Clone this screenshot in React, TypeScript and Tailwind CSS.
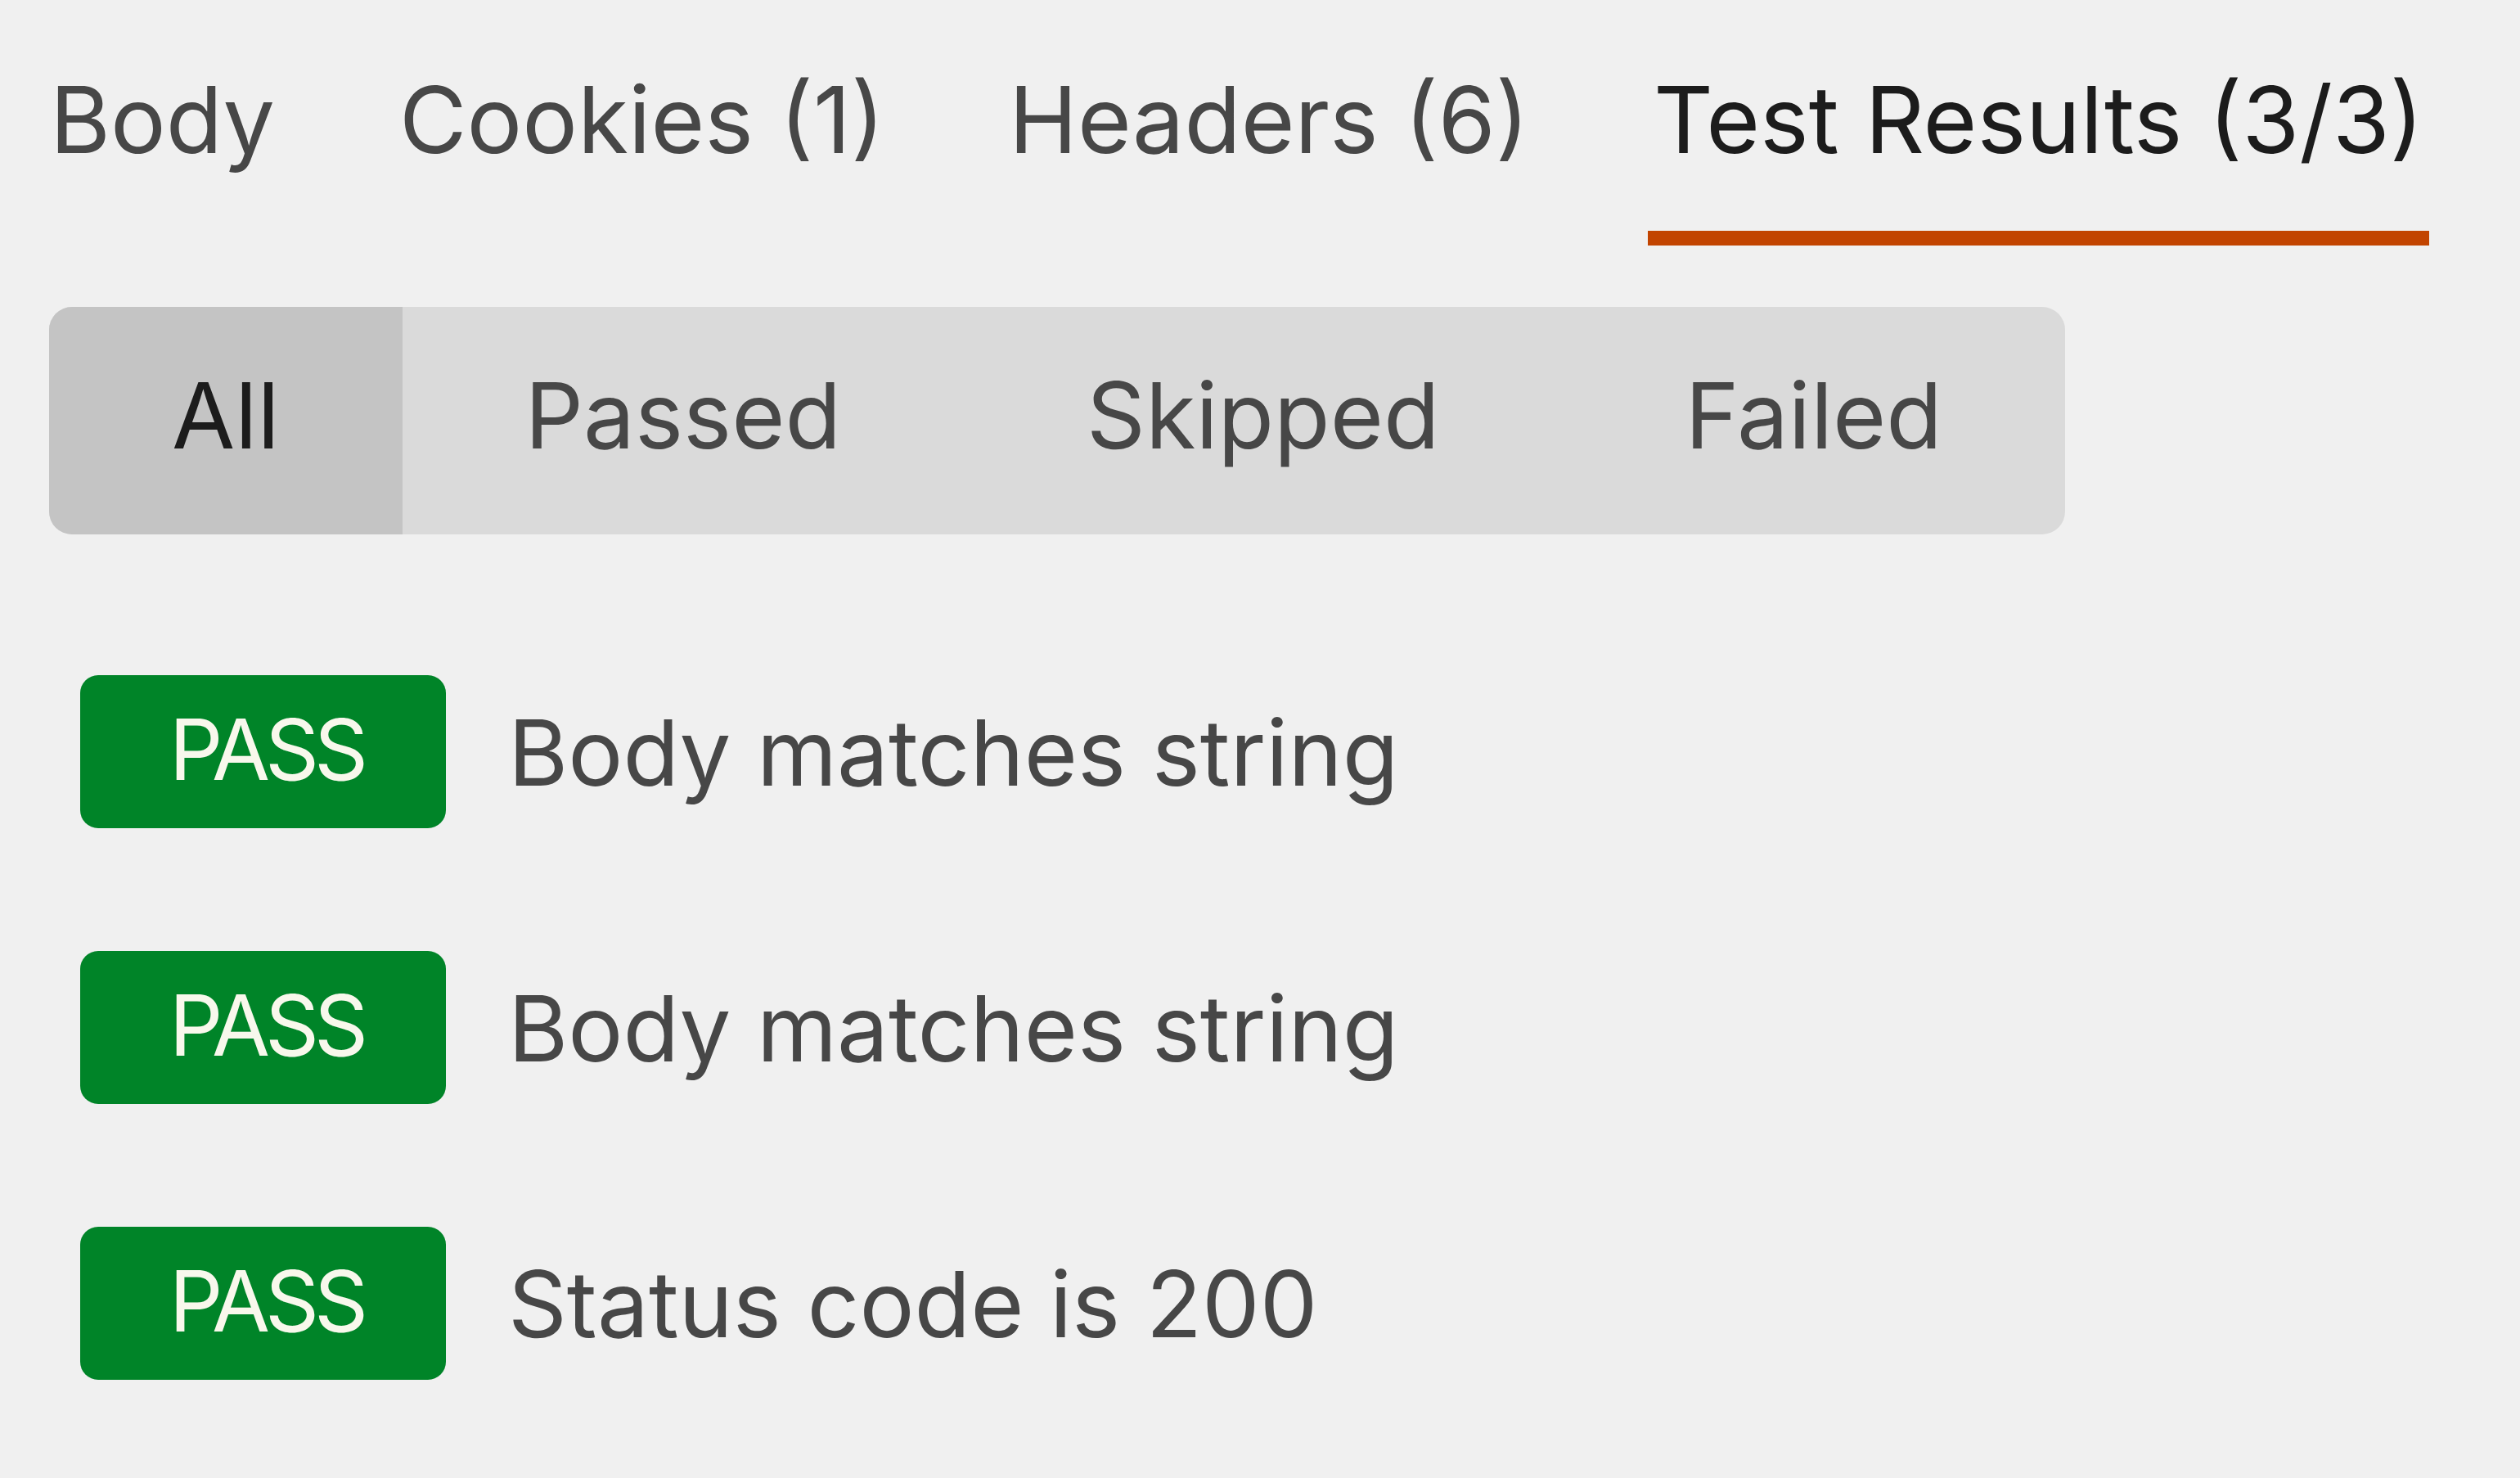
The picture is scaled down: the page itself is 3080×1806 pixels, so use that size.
import React from "react";

const tabs = [
  { label: "Body", active: false },
  { label: "Cookies (1)", active: false },
  { label: "Headers (6)", active: false },
  { label: "Test Results (3/3)", active: true },
];

const filters = [
  { label: "All", active: true },
  { label: "Passed", active: false },
  { label: "Skipped", active: false },
  { label: "Failed", active: false },
];

const results = ["Body matches string", "Body matches string", "Status code is 200"];

export default function App() {
  return (
    <div className="w-[3080px] h-[1806px] overflow-hidden bg-[#f0f0f0] pl-[60px] pt-[90px] font-['Inter',sans-serif]">
      <div className="flex items-start gap-[138px] -ml-[6px]">
        {tabs.map((t) => (
          <div
            key={t.label}
            className={
              "px-[7px] pb-[79px] text-[113px] leading-none whitespace-nowrap border-b-[18px] " +
              (t.active ? "text-[#1c1c1c] border-[#c24400]" : "text-[#474747] border-transparent")
            }
          >
            {t.label}
          </div>
        ))}
      </div>

      <div className="mt-[75px] inline-flex rounded-[28px] bg-[#dadada] overflow-hidden">
        {filters.map((f) => (
          <div
            key={f.label}
            className={
              "px-[150px] pt-[76px] pb-[90px] text-[112px] leading-none whitespace-nowrap " +
              (f.active ? "bg-[#c4c4c4] text-[#1c1c1c]" : "text-[#474747]")
            }
          >
            {f.label}
          </div>
        ))}
      </div>

      <div className="mt-[172px] pl-[38px] flex flex-col gap-[150px]">
        {results.map((r, i) => (
          <div key={i} className="flex items-start gap-[76px]">
            <div className="w-[447px] h-[187px] rounded-[22px] bg-[#008428] flex justify-center pl-[8px] pt-[39px] text-[103px] leading-none text-[#f8f8ec] tracking-[-6px]">
              PASS
            </div>
            <div className="mt-[38px] text-[112px] leading-none text-[#474747] whitespace-nowrap">
              {r}
            </div>
          </div>
        ))}
      </div>
    </div>
  );
}
